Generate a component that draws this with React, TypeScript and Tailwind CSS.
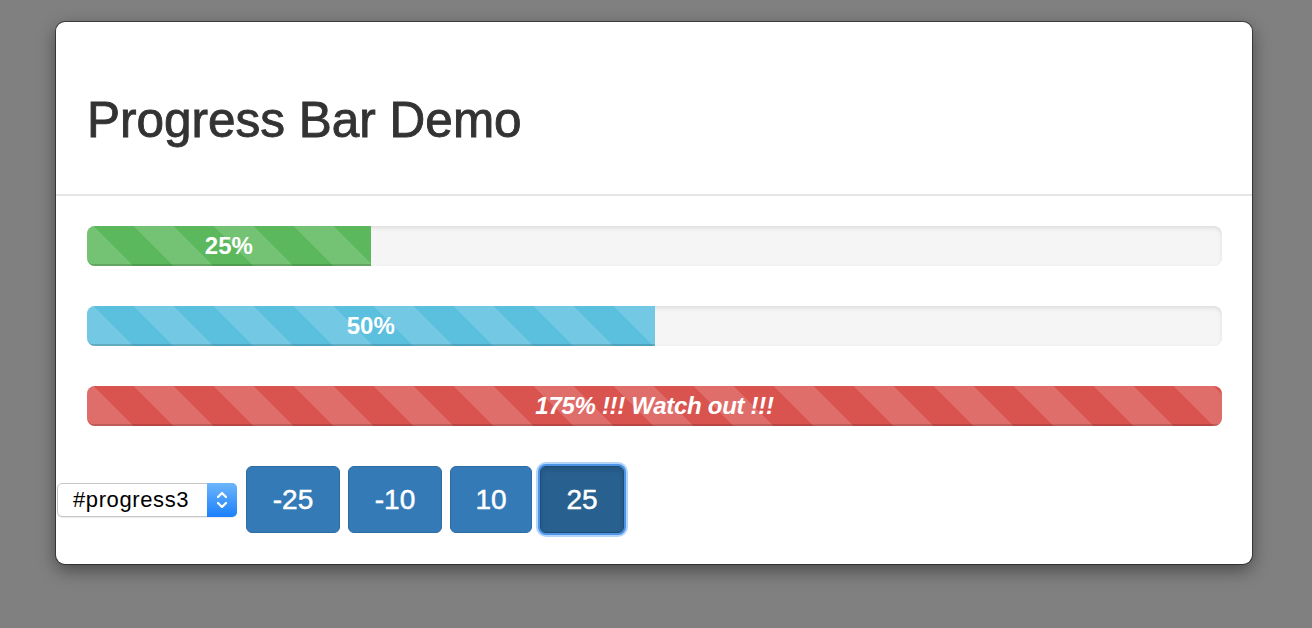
const stripes =
  "bg-[linear-gradient(45deg,rgba(255,255,255,0.15)_25%,transparent_25%,transparent_50%,rgba(255,255,255,0.15)_50%,rgba(255,255,255,0.15)_75%,transparent_75%,transparent)] bg-[length:80px_80px] bg-[position:47px_0]";

const bars = [
  { id: "progress1", value: 25, label: "25%", color: "bg-[#5cb85c]", italic: false },
  { id: "progress2", value: 50, label: "50%", color: "bg-[#5bc0de]", italic: false },
  { id: "progress3", value: 175, label: "175% !!! Watch out !!!", color: "bg-[#d9534f]", italic: true },
];

const buttons = [
  { label: "-25", width: "w-[94px]", active: false },
  { label: "-10", width: "w-[94px]", active: false },
  { label: "10", width: "w-[82px]", active: false },
  { label: "25", width: "w-[84px]", active: true },
];

function ProgressBar({ value, label, color, italic }: { value: number; label: string; color: string; italic: boolean }) {
  return (
    <div className="h-10 w-full overflow-hidden rounded-lg bg-[#f5f5f5] shadow-[inset_0_2px_4px_rgba(0,0,0,0.1)]">
      <div
        className={`h-full ${color} ${stripes} shadow-[inset_0_-2px_0_rgba(0,0,0,0.15)] text-center text-2xl leading-10 font-bold text-white whitespace-nowrap ${italic ? "italic tracking-[-0.3px]" : ""}`}
        style={{ width: `${Math.min(value, 100)}%` }}
      >
        {label}
      </div>
    </div>
  );
}

function FakeSelect() {
  return (
    <div className="mr-px flex h-[34px] w-[180px] items-stretch rounded-[5px] border border-[#c6c6c6] bg-white shadow-[0_1px_1px_rgba(0,0,0,0.08)]">
      <div className="flex flex-1 items-center pl-[15px] text-[22px] tracking-[0.6px] text-black">#progress3</div>
      <div className="-my-px -mr-px flex w-[30px] items-center justify-center rounded-r-[5px] bg-[linear-gradient(#6db5fb,#1b80fb)]">
        <svg width="14" height="24" viewBox="0 0 14 24" fill="none" stroke="white" strokeWidth="2.2" strokeLinecap="round" strokeLinejoin="round">
          <path d="M3 9 L7 5 L11 9" />
          <path d="M3 15 L7 19 L11 15" />
        </svg>
      </div>
    </div>
  );
}

export default function App() {
  return (
    <div className="h-[628px] w-[1312px] bg-[#808080] pl-[56px] pt-[22px] font-['Liberation_Sans',Arial,sans-serif]">
      <div className="h-[542px] w-[1196px] rounded-[9px] bg-white shadow-[0_0_0_1px_rgba(30,30,30,0.65),0_6px_18px_rgba(0,0,0,0.45)]">
        <div className="h-[174px] border-b-2 border-[#e5e5e5] pl-[31px] pt-[73px]">
          <h1 className="text-[49.5px] leading-none font-normal text-[#333] [-webkit-text-stroke:0.9px_#333]">Progress Bar Demo</h1>
        </div>

        <div className="flex flex-col gap-10 pl-[31px] pr-[30px] pt-[30px]">
          {bars.map((b) => (
            <ProgressBar key={b.id} value={b.value} label={b.label} color={b.color} italic={b.italic} />
          ))}
        </div>

        <div className="mt-10 flex items-center gap-2 pl-px">
          <FakeSelect />
          {buttons.map((b) => (
            <button
              key={b.label}
              className={`flex h-[67px] ${b.width} items-center justify-center rounded-md border text-[28px] text-white [-webkit-text-stroke:0.5px_white] ${
                b.active
                  ? "border-[#204d74] bg-[#286090] shadow-[inset_0_3px_5px_rgba(0,0,0,0.125),0_0_0_2px_#4d93e6,0_0_0_4px_#b3d5fa]"
                  : "border-[#2e6da4] bg-[#337ab7]"
              }`}
            >
              {b.label}
            </button>
          ))}
        </div>
      </div>
    </div>
  );
}
